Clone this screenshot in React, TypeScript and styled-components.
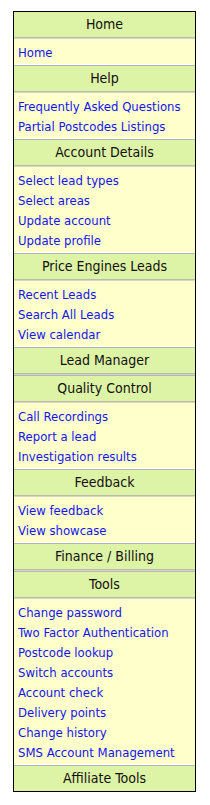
import styled, { createGlobalStyle } from "styled-components";

const GlobalStyle = createGlobalStyle`
  html, body {
    margin: 0;
    padding: 0;
    background: #ffffff;
  }
`;

const Page = styled.div`
  padding: 11px 0 0 13px;
`;

const Menu = styled.nav`
  width: 181px;
  border: 1px solid #000;
  background: #ffffcc;
  font-family: "DejaVu Sans Condensed", "DejaVu Sans", Verdana, sans-serif;
`;

const Heading = styled.div<{ $first?: boolean; $last?: boolean }>`
  height: 25px;
  line-height: 25px;
  text-align: center;
  font-size: 14px;
  color: #111;
  background: #ddf3a5;
  border-top: ${(p) => (p.$first ? "none" : "1px solid #b4b4b4")};
  box-shadow: ${(p) => (p.$last ? "none" : "inset 0 -1px 0 #d4d6c8, inset 0 -2px 0 #b8bca8")};
  padding-bottom: ${(p) => (p.$last ? "0" : "2px")};
`;

const Links = styled.ul`
  list-style: none;
  margin: 0;
  padding: 4px 0 1px 4px;
  border-bottom: 1px solid #ffffff;
`;

const Item = styled.li`
  height: 20px;
  line-height: 20px;
  font-size: 13px;
  white-space: nowrap;
`;

const Link = styled.a`
  color: #1414f0;
  text-decoration: none;
`;

const sections: { title: string; links: string[] }[] = [
  { title: "Home", links: ["Home"] },
  { title: "Help", links: ["Frequently Asked Questions", "Partial Postcodes Listings"] },
  {
    title: "Account Details",
    links: ["Select lead types", "Select areas", "Update account", "Update profile"],
  },
  { title: "Price Engines Leads", links: ["Recent Leads", "Search All Leads", "View calendar"] },
  { title: "Lead Manager", links: [] },
  {
    title: "Quality Control",
    links: ["Call Recordings", "Report a lead", "Investigation results"],
  },
  { title: "Feedback", links: ["View feedback", "View showcase"] },
  { title: "Finance / Billing", links: [] },
  {
    title: "Tools",
    links: [
      "Change password",
      "Two Factor Authentication",
      "Postcode lookup",
      "Switch accounts",
      "Account check",
      "Delivery points",
      "Change history",
      "SMS Account Management",
    ],
  },
  { title: "Affiliate Tools", links: [] },
];

export default function App() {
  return (
    <Page>
      <GlobalStyle />
      <Menu>
        {sections.map((s, i) => (
          <div key={s.title}>
            <Heading $first={i === 0} $last={i === sections.length - 1}>
              {s.title}
            </Heading>
            {s.links.length > 0 && (
              <Links>
                {s.links.map((l) => (
                  <Item key={l}>
                    <Link href="#">{l}</Link>
                  </Item>
                ))}
              </Links>
            )}
          </div>
        ))}
      </Menu>
    </Page>
  );
}
